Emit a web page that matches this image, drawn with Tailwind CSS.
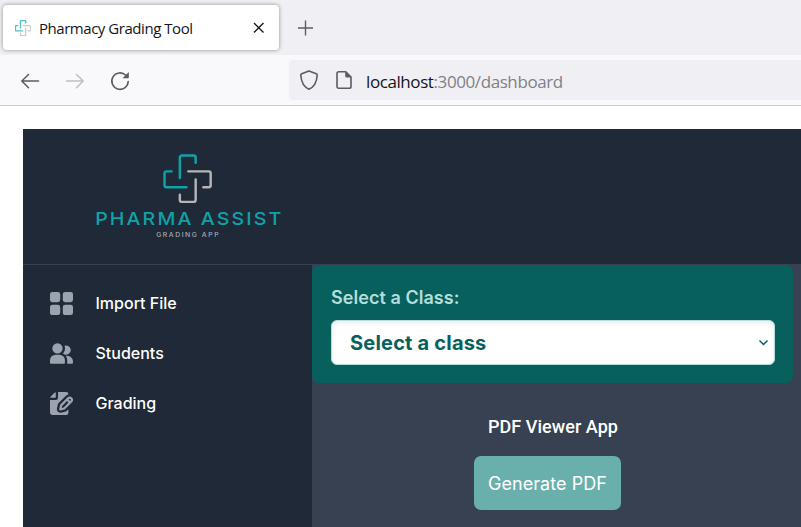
<!DOCTYPE html>
<html lang="en">
<head>
<meta charset="utf-8">
<title>Pharmacy Grading Tool</title>
<script src="https://cdn.jsdelivr.net/npm/@tailwindcss/browser@4"></script>
</head>
<body class="h-[527px] w-[801px] overflow-hidden bg-white font-['Inter','Liberation_Sans',sans-serif]">
<svg class="hidden">
  <symbol id="cross" viewBox="0 0 48 48">
    <g fill="none" stroke-linecap="round" stroke-linejoin="round">
      <path stroke="#0fa3a8" d="M16.500 23.500V3.500Q16.500 1.500 18.500 1.500H30Q32 1.500 32 3.500V8.500M8.500 17H3.500Q1.500 17 1.500 19V30.500Q1.500 32.500 3.500 32.500H23"/>
      <path stroke="#b5b5b5" d="M24.800 17H45Q46.700 17 46.700 19V30.500Q46.700 32.500 44.700 32.500H39.500M32 25V45Q32 47 30 47H18.500Q16.500 47 16.500 45V40"/>
    </g>
  </symbol>
</svg>

<!-- Tab strip -->
<div class="flex h-[55px] items-start bg-[#f0f0f4] pt-[5px] pl-[3px]">
  <div class="flex h-[45px] w-[276px] items-center rounded-[4px] bg-white pr-[13px] pl-[12px] shadow-[0_0_4px_rgba(0,0,0,0.4)]">
    <svg class="size-4 opacity-70" stroke-width="4"><use href="#cross"/></svg>
    <span class="mt-px ml-2 text-[15px] leading-5 whitespace-nowrap text-[#15141a] font-['Open_Sans','Noto_Sans',sans-serif] tracking-[-0.46px]">Pharmacy Grading Tool</span>
    <svg class="ml-auto size-[15px]" viewBox="0 0 15 15" fill="none" stroke="#15141a" stroke-width="1.3"><path d="M3 3l9.500 9.500M12.500 3L3 12.500"/></svg>
  </div>
  <svg class="mt-[15px] ml-[18px] size-4" viewBox="0 0 16 16" fill="none" stroke="#5b5b66" stroke-width="1.4"><path d="M8.500 .5v15M1 8h15"/></svg>
</div>

<!-- Navigation bar -->
<div class="flex h-[51px] items-center border-b border-[#cccccc] bg-[#f9f9fb] pl-[20px]">
  <svg class="mt-px size-5" viewBox="0 0 20 20" fill="none" stroke="#5b5b66" stroke-width="1.5" stroke-linecap="round" stroke-linejoin="round"><path d="M18.500 10H2M8.500 3.500L1.800 10l6.700 6.700"/></svg>
  <svg class="mt-px ml-[25px] size-5" viewBox="0 0 20 20" fill="none" stroke="#bdbdc4" stroke-width="1.5" stroke-linecap="round" stroke-linejoin="round"><path d="M1.500 10H18M11.500 3.500l6.700 6.500-6.700 6.700"/></svg>
  <svg class="mt-px ml-[25px] size-5" viewBox="0 0 20 20" fill="none" stroke="#5b5b66" stroke-width="1.6" stroke-linecap="round" stroke-linejoin="round"><path d="M18.200 10.500A8.200 8.200 0 1 1 15.800 4.300"/><path fill="#5b5b66" stroke="none" d="M18.800 1v5.500q0 .7-.7.700h-5.500z"/></svg>
  <div class="ml-[159px] flex h-10 flex-1 items-center rounded-l-[4px] bg-[#f0f0f4] pl-[10px]">
    <svg class="size-5" viewBox="0 0 20 20" fill="none" stroke="#5b5b66" stroke-width="1.6" stroke-linejoin="round"><path d="M10 1L17.300 3.800Q18.300 4.200 18.200 5.300C17.800 11.500 15.200 17 10 19.200C4.800 17 2.200 11.500 1.800 5.300Q1.700 4.200 2.700 3.800Z"/></svg>
    <svg class="ml-[15px] size-5" viewBox="0 0 20 20" fill="none" stroke="#5b5b66" stroke-width="1.6" stroke-linejoin="round"><path d="M4.800 1.800h7l5.200 5.200v9.400q0 1.800-1.800 1.800H4.800Q3 18.200 3 16.400V3.600Q3 1.800 4.800 1.800z"/><path fill="#5b5b66" stroke="none" d="M11.200 1.500V6q0 1.500 1.500 1.500h4.500z"/></svg>
    <span class="mt-[4px] ml-[12px] text-[17px] leading-6 text-[#808086] font-['Open_Sans','Noto_Sans',sans-serif] tracking-[-0.41px]"><span class="text-[#15141a]">localhost</span>:3000/dashboard</span>
  </div>
</div>

<!-- Application -->
<div class="mt-[23px] ml-[23px] flex h-[398px] flex-col bg-[#1f2937]">
  <header class="h-[136px] border-b border-[#374151] pt-[25px] pl-[67px]">
    <div class="flex w-[194px] flex-col items-center">
      <svg class="size-[49px]" stroke-width="2.4"><use href="#cross"/></svg>
      <div class="mt-[4px] h-5 scale-x-112 pl-[4px] text-[17.5px] leading-[23px] font-medium whitespace-nowrap text-[#0fa3a8] tracking-[1.9px]">PHARMA ASSIST</div>
      <div class="mt-[4px] scale-x-114 pl-[2px] text-[6px] leading-[8px] font-medium whitespace-nowrap text-[#a9adb3] tracking-[1.35px]">GRADING APP</div>
    </div>
  </header>
  <div class="flex flex-1">
    <nav class="flex w-[289px] flex-col pt-[13px] pl-[27px] text-base font-medium text-white">
      <a class="flex h-[50px] items-center gap-[22.500px]">
        <svg class="size-[23px] text-[#9ca3af]" viewBox="0 0 18 18" fill="currentColor"><path d="M6.143 0H1.857A1.857 1.857 0 0 0 0 1.857v4.286C0 7.169.831 8 1.857 8h4.286A1.857 1.857 0 0 0 8 6.143V1.857A1.857 1.857 0 0 0 6.143 0Zm10 0h-4.286A1.857 1.857 0 0 0 10 1.857v4.286C10 7.169 10.831 8 11.857 8h4.286A1.857 1.857 0 0 0 18 6.143V1.857A1.857 1.857 0 0 0 16.143 0Zm-10 10H1.857A1.857 1.857 0 0 0 0 11.857v4.286C0 17.169.831 18 1.857 18h4.286A1.857 1.857 0 0 0 8 16.143v-4.286A1.857 1.857 0 0 0 6.143 10Zm10 0h-4.286A1.857 1.857 0 0 0 10 11.857v4.286c0 1.026.831 1.857 1.857 1.857h4.286A1.857 1.857 0 0 0 18 16.143v-4.286A1.857 1.857 0 0 0 16.143 10Z"/></svg>
        <span>Import File</span>
      </a>
      <a class="flex h-[50px] items-center gap-[22.500px]">
        <svg class="size-[23px] text-[#9ca3af]" viewBox="0 0 20 18" fill="currentColor"><path d="M14 2a3.963 3.963 0 0 0-1.400.267 6.439 6.439 0 0 1-1.331 6.638A4 4 0 1 0 14 2Zm1 9h-1.264A6.957 6.957 0 0 1 15 15v2a2.970 2.970 0 0 1-.184 1H19a1 1 0 0 0 1-1v-1a5.006 5.006 0 0 0-5-5ZM6.500 9a4.500 4.500 0 1 0 0-9 4.500 4.500 0 0 0 0 9ZM8 10H5a5.006 5.006 0 0 0-5 5v2a1 1 0 0 0 1 1h11a1 1 0 0 0 1-1v-2a5.006 5.006 0 0 0-5-5Z"/></svg>
        <span>Students</span>
      </a>
      <a class="flex h-[50px] items-center gap-[22.500px]">
        <svg class="size-[23px] text-[#9ca3af]" viewBox="0 0 20 20" fill="currentColor"><path d="M5 5V.13a2.960 2.960 0 0 0-1.293.749L.879 3.707A2.960 2.960 0 0 0 .13 5H5Z"/><path d="M6.737 11.061a2.961 2.961 0 0 1 .81-1.515l6.117-6.116A4.839 4.839 0 0 1 16 2.141V2a1.970 1.970 0 0 0-1.933-2H7v5a2 2 0 0 1-2 2H0v11a1.969 1.969 0 0 0 1.933 2h12.134A1.970 1.970 0 0 0 16 18v-3.093l-1.546 1.546c-.413.413-.94.695-1.513.81l-3.400.679a2.947 2.947 0 0 1-1.850-.227 2.960 2.960 0 0 1-1.635-3.257l.681-3.397Z"/><path d="M8.961 16a.93.93 0 0 0 .189-.019l3.400-.679a.961.961 0 0 0 .49-.263l6.118-6.117a2.884 2.884 0 0 0-4.079-4.078l-6.117 6.117a.96.96 0 0 0-.263.491l-.679 3.400A.961.961 0 0 0 8.961 16Zm7.477-9.800a.958.958 0 0 1 .68-.281.961.961 0 0 1 .682 1.644l-.315.315-1.360-1.360.313-.318Zm-5.911 5.911 4.236-4.236 1.359 1.359-4.236 4.237-1.700.339.341-1.699Z"/></svg>
        <span>Grading</span>
      </a>
    </nav>
    <main class="flex flex-1 flex-col bg-[#374151] pr-2">
      <section class="h-[118px] rounded-[7px] bg-[#08605d] pt-[20px] pr-[18px] pl-[19px]">
        <div class="text-lg leading-[26px] font-semibold tracking-[0.05px] whitespace-nowrap text-[#b2dfdb]">Select a Class:</div>
        <div class="mt-[9px] flex h-[45px] items-center justify-between rounded-[6px] border border-[#b2dfdb] bg-white pr-[5px] pl-[18px] shadow-[inset_0_2px_4px_rgba(0,0,0,0.08)]">
          <span class="text-xl font-bold tracking-[0.2px] text-[#08605d]">Select a class</span>
          <svg class="size-[11px]" viewBox="0 0 11 11" fill="none" stroke="#08605d" stroke-width="1.5"><path d="M1.500 3.500l4 4 4-4"/></svg>
        </div>
      </section>
      <section class="flex flex-col items-center pt-[31px] pr-[10px]">
        <h2 class="pl-[11px] text-[18px] leading-[26px] font-medium tracking-[0.05px] whitespace-nowrap text-white font-['Roboto',sans-serif]">PDF Viewer App</h2>
        <button class="mt-[16px] h-[54px] w-[147px] rounded-[7px] bg-[#69b0ac] pt-px text-lg tracking-[0.05px] whitespace-nowrap text-white">Generate PDF</button>
      </section>
    </main>
  </div>
</div>
</body>
</html>
